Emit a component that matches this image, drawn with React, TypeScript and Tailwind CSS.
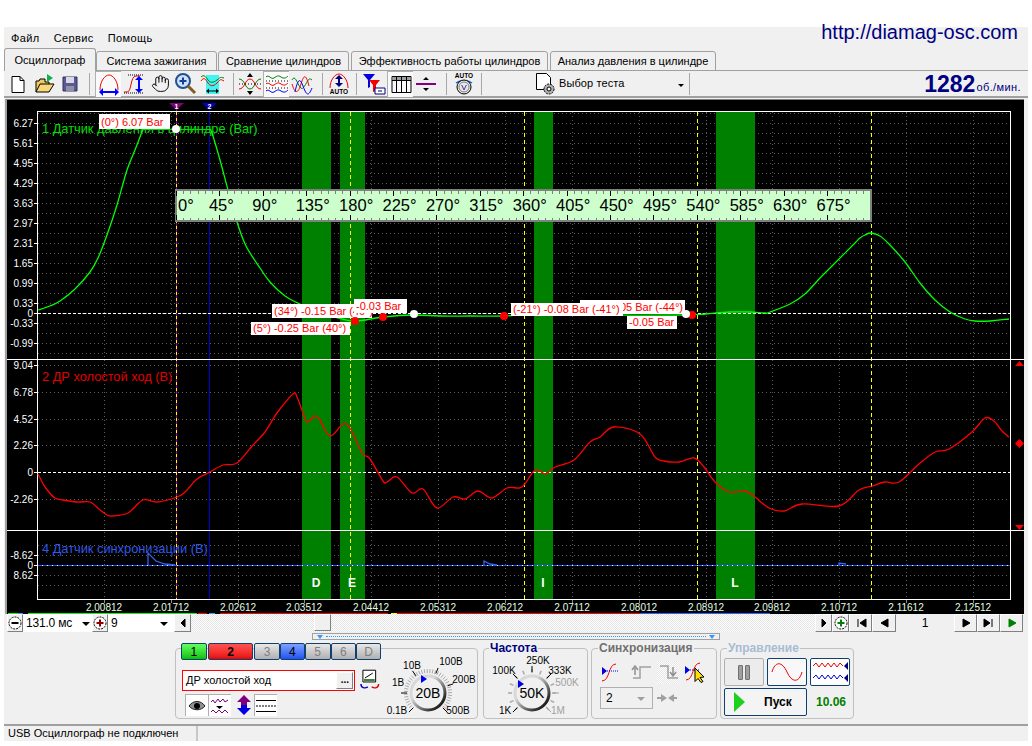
import { Hand } from "lucide-react";
import { ReactNode } from "react";

// ---------- chart data (page coordinates) ----------
const GRID_X = [104, 171, 238, 304, 371, 438, 505, 572, 639, 706, 772, 839, 906, 973];
const TIME_LABELS = [
  "2.00812", "2.01712", "2.02612", "2.03512", "2.04412", "2.05312", "2.06212",
  "2.07112", "2.08012", "2.08912", "2.09812", "2.10712", "2.11612", "2.12512",
];
const BANDS = [
  [302, 331],
  [340, 365],
  [534, 553],
  [716, 755],
];
const YELLOW_X = [350.5, 524.5, 697.5, 871.5];

const CH1_LABELS: [string, number][] = [
  ["6.27", 123], ["5.61", 143], ["4.95", 163], ["4.29", 183], ["3.63", 203], ["2.97", 223], ["2.31", 243],
  ["1.65", 263], ["0.99", 283], ["0.33", 303], ["0", 313], ["-0.33", 323], ["-0.99", 343],
];
const CH2_LABELS: [string, number][] = [
  ["9.04", 365], ["6.78", 392], ["4.52", 419], ["2.26", 445], ["0", 472], ["-2.26", 499],
];
const CH4_LABELS: [string, number][] = [
  ["-8.62", 555], ["0", 565], ["8.62", 575],
];

const GREEN_LEFT =
  "38,310 50,306 60,301 75,289 90,272 98,258 107,235 117,205 127,170 135,150 143,129";
const GREEN_RIGHT =
  "210,129 212,133 220,160 228,190 237,222 246,246 260,268 270,282 285,296 300,304 315,310 335,317 355,321 383,317 414,315 440,316 " +
  "470,316 505,316 534,314 600,315 686,315 692,315 705,314 730,312 750,312 765,313 770,312 790,304 805,294 820,278 838,260 855,243 " +
  "860,238 865,235 871,233 880,236 890,245 905,262 920,283 935,300 950,312 965,319 975,321 990,321 1009,319";

const RED_CURVE =
  "38,474 45,487 55,498 63,500 77,502 90,502 100,510 107,515 112,516 128,513 143,500 157,502 177,497 185,492 197,479 210,472 223,465 " +
  "237,463 253,445 265,432 277,413 293,394 297,397 303,413 307,422 315,416 320,420 330,436 343,424 350,428 362,453 370,459 383,481 " +
  "387,482 397,477 412,493 423,489 437,508 453,497 465,499 478,491 492,498 507,488 519,488 524,485 534,471 540,471 546,474 555,467 " +
  "574,460 590,442 600,437 614,427 640,434 655,457 664,461 679,462 694,458 704,467 715,482 729,492 745,491 755,497 769,508 784,511 " +
  "802,504 839,506 859,490 872,486 885,482 899,482 919,464 935,452 949,449 972,432 985,418 994,421 1002,431 1009,437";

// catmull-rom through the sampled points
const smooth = (raw: string) => {
  const p = raw.trim().split(/\s+/).map((s) => s.split(",").map(Number));
  let d = `M${p[0][0]} ${p[0][1]}`;
  for (let i = 0; i < p.length - 1; i++) {
    const a = p[Math.max(i - 1, 0)];
    const b = p[i];
    const c = p[i + 1];
    const e = p[Math.min(i + 2, p.length - 1)];
    d += `C${b[0] + (c[0] - a[0]) / 6} ${b[1] + (c[1] - a[1]) / 6} ${c[0] - (e[0] - b[0]) / 6} ${c[1] - (e[1] - b[1]) / 6} ${c[0]} ${c[1]}`;
  }
  return d;
};

// ---------- chart bits ----------
const Dotted = ({ x1, y1, x2, y2 }: { x1: number; y1: number; x2: number; y2: number }) => (
  <line x1={x1} y1={y1} x2={x2} y2={y2} stroke="#5c5c5c" strokeDasharray="1 3" shapeRendering="crispEdges" />
);

const YLabels = ({ items }: { items: [string, number][] }) => (
  <>
    {items.map(([t, y]) => (
      <g key={t + y}>
        <text x={33} y={y + 3.5} textAnchor="end" fill="#ffffff" fontSize={10}>
          {t}
        </text>
        <line x1={34} y1={y + 0.5} x2={37} y2={y + 0.5} stroke="#ffffff" shapeRendering="crispEdges" />
      </g>
    ))}
  </>
);

const Tag = ({ x, y, w, h, text, end }: { x: number; y: number; w: number; h: number; text: string; end?: boolean }) => (
  <g>
    <rect x={x} y={y} width={w} height={h} fill="#ffffff" />
    <text
      x={end ? x + w - 2 : x + 2}
      y={y + h - 3.5}
      textAnchor={end ? "end" : "start"}
      fill="#ff0000"
      fontSize={11}
    >
      {text}
    </text>
  </g>
);

const Ruler = () => {
  const step = 43.4;
  const labels = [0, 45, 90, 135, 180, 225, 270, 315, 360, 405, 450, 495, 540, 585, 630, 675];
  const minor = Array.from({ length: 96 }, (_, i) => 176.5 + (i * step) / 6);
  return (
    <g>
      <rect x={176} y={190} width={695} height={31} fill="#ccffcc" stroke="#808080" strokeWidth={2} />
      {minor.map((x, i) => (
        <g key={i} shapeRendering="crispEdges">
          <line x1={x} y1={191} x2={x} y2={i % 6 === 0 ? 196 : 194} stroke={i % 6 === 0 ? "#000000" : "#808080"} />
          <line x1={x} y1={220} x2={x} y2={i % 6 === 0 ? 215 : 218} stroke={i % 6 === 0 ? "#000000" : "#808080"} />
        </g>
      ))}
      {labels.map((d, i) => (
        <text key={d} x={i === 0 ? 178 : 176.5 + i * step - 11} y={211} fontSize={16.5} fill="#000000">
          {d}°
        </text>
      ))}
    </g>
  );
};

const Chart = () => (
  <div className="mt-px ml-px h-[515px] w-[1019px] border-t border-l-2 border-t-[#808080] border-l-[#a0a0a0] bg-black">
    <svg width={1017} height={514} viewBox="7 100 1017 514" className="block">
      {/* grid */}
      {GRID_X.map((x) => (
        <g key={x}>
          <Dotted x1={x + 0.5} y1={112} x2={x + 0.5} y2={599} />
          <line x1={x + 0.5} y1={600} x2={x + 0.5} y2={603} stroke="#8a8a8a" shapeRendering="crispEdges" />
        </g>
      ))}
      {Array.from({ length: 25 }, (_, i) => 113 + i * 10).map((y) => (
        <Dotted key={y} x1={38} y1={y + 0.5} x2={1010} y2={y + 0.5} />
      ))}
      {[365, 392, 419, 445, 499, 545, 555, 575, 585].map((y) => (
        <Dotted key={y} x1={38} y1={y + 0.5} x2={1010} y2={y + 0.5} />
      ))}

      {BANDS.map(([a, b]) => (
        <rect key={a} x={a} y={111} width={b - a} height={489} fill="#008000" />
      ))}

      {/* cursors */}
      {YELLOW_X.map((x) => (
        <line key={x} x1={x} y1={112} x2={x} y2={599} stroke="#ffff00" strokeDasharray="4 3" shapeRendering="crispEdges" />
      ))}
      <line x1={176.5} y1={103} x2={176.5} y2={600} stroke="#a000a0" shapeRendering="crispEdges" />
      <line x1={176.5} y1={112} x2={176.5} y2={599} stroke="#ffff00" strokeDasharray="3 3" shapeRendering="crispEdges" />
      <line x1={209.5} y1={103} x2={209.5} y2={600} stroke="#0000d0" shapeRendering="crispEdges" />
      <polygon points="169,103 184,103 176.5,110" fill="#800080" />
      <polygon points="202,103 217,103 209.5,110" fill="#0000c0" />
      <text x={176.5} y={108.5} textAnchor="middle" fontSize={7} fontWeight="bold" fill="#ffffff">1</text>
      <text x={209.5} y={108.5} textAnchor="middle" fontSize={7} fontWeight="bold" fill="#ffffff">2</text>

      {/* zero lines */}
      <line x1={38} y1={313.5} x2={1010} y2={313.5} stroke="#ffffff" strokeDasharray="3 2" shapeRendering="crispEdges" />
      <line x1={38} y1={472.5} x2={1010} y2={472.5} stroke="#ffffff" strokeDasharray="3 2" shapeRendering="crispEdges" />
      <line x1={38} y1={565.5} x2={1010} y2={565.5} stroke="#ffffff" shapeRendering="crispEdges" />
      <line x1={38} y1={565.5} x2={1010} y2={565.5} stroke="#2050ff" strokeDasharray="4 1" shapeRendering="crispEdges" />

      {/* frame */}
      <rect x={37.5} y={111.5} width={973} height={488} fill="none" stroke="#ffffff" shapeRendering="crispEdges" />
      <line x1={7} y1={359.5} x2={1024} y2={359.5} stroke="#ffffff" shapeRendering="crispEdges" />
      <line x1={7} y1={530.5} x2={1024} y2={530.5} stroke="#ffffff" shapeRendering="crispEdges" />

      <YLabels items={CH1_LABELS} />
      <YLabels items={CH2_LABELS} />
      <YLabels items={CH4_LABELS} />

      {/* traces */}
      <text x={42} y={133} fontSize={12.8} fill="#00e000">1 Датчик давления в цилиндре (Bar)</text>
      <text x={42} y={381} fontSize={12.8} fill="#e00000">2 ДР холостой ход (B)</text>
      <text x={42} y={553} fontSize={12.8} fill="#3358e8">4 Датчик синхронизации (B)</text>
      <path d={smooth(GREEN_LEFT)} fill="none" stroke="#00ff00" strokeWidth={1.3} />
      <path d="M143 129H210" fill="none" stroke="#00e000" shapeRendering="crispEdges" />
      <path d={smooth(GREEN_RIGHT)} fill="none" stroke="#00ff00" strokeWidth={1.3} />
      <path d={smooth(RED_CURVE)} fill="none" stroke="#ff0000" strokeWidth={1.3} />
      <polyline points="148,565 148,553 156,561 165,564 175,565" fill="none" stroke="#3366ee" strokeWidth={1.3} />
      <polyline points="484,565 484,561 490,564 497,565" fill="none" stroke="#3366ee" strokeWidth={1.3} />
      <polyline points="839,565 839,563 846,564" fill="none" stroke="#3366ee" strokeWidth={1.3} />

      <Ruler />

      {/* measure tags */}
      <Tag x={99} y={114} w={71} h={15} text="(0°) 6.07 Bar" />
      <Tag x={272} y={304} w={100} h={14} text="(34°) -0.15 Bar (40°)" />
      <Tag x={354} y={299} w={53} h={14} text="-0.03 Bar" />
      <Tag x={251} y={322} w={99} h={13} text="(5°) -0.25 Bar (40°)" />
      <Tag x={580} y={300} w={105} h={14} text="-0.05 Bar (-44°)" end />
      <Tag x={511} y={303} w={112} h={13} text="(-21°) -0.08 Bar (-41°)" />
      <Tag x={627} y={316} w={50} h={13} text="-0.05 Bar" />
      {[[355, 321], [383, 317], [504, 316], [692, 315]].map(([x, y]) => (
        <circle key={x} cx={x} cy={y} r={4} fill="#ff0000" />
      ))}
      {[[176, 129], [414, 314], [686, 314]].map(([x, y]) => (
        <circle key={x} cx={x} cy={y} r={4} fill="#ffffff" />
      ))}

      {/* timing letters */}
      {[["D", 316], ["E", 352], ["I", 543], ["L", 735]].map(([t, x]) => (
        <text key={t} x={x} y={587} textAnchor="middle" fontSize={12} fontWeight="bold" fill="#ffffff">
          {t}
        </text>
      ))}

      {/* channel 2 scale markers */}
      <polygon points="1019.5,361 1024,366 1015,366" fill="#ff0000" />
      <polygon points="1019.5,439 1024,443.500 1019.5,448 1015,443.500" fill="#ff0000" />
      <polygon points="1015,525 1024,525 1019.5,530" fill="#ff0000" />

      {/* time axis */}
      {TIME_LABELS.map((t, i) => (
        <text key={t} x={GRID_X[i]} y={611} textAnchor="middle" fontSize={10} fill="#e0ffe0">
          {t}
        </text>
      ))}
      <g shapeRendering="crispEdges">
        <line x1={8} y1={613.5} x2={18} y2={613.5} stroke="#00ff00" />
        <line x1={18} y1={613.5} x2={23} y2={613.5} stroke="#3399ff" />
        <line x1={28} y1={613.5} x2={197} y2={613.5} stroke="#00ff00" />
        <line x1={198} y1={613.5} x2={207} y2={613.5} stroke="#ff0000" />
        <line x1={209} y1={613.5} x2={215} y2={613.5} stroke="#3399ff" />
        <line x1={220} y1={613.5} x2={388} y2={613.5} stroke="#ff0000" />
        <line x1={391} y1={613.5} x2={397} y2={613.5} stroke="#ffff00" />
        <line x1={397} y1={613.5} x2={640} y2={613.5} stroke="#ff0000" />
        <line x1={640} y1={613.5} x2={770} y2={613.5} stroke="#2266ff" />
      </g>
    </svg>
  </div>
);

// ---------- toolbar icons ----------
const Ico = ({ children, w = 24, h = 24 }: { children: ReactNode; w?: number; h?: number }) => (
  <svg width={w} height={h} viewBox={`0 0 ${w} ${h}`} fill="none">
    {children}
  </svg>
);

const IconNew = () => (
  <Ico>
    <path d="M6 4.5h8l4 4v12H6z" fill="#fff" stroke="#000" />
    <path d="M14 4.5v4h4" stroke="#000" />
  </Ico>
);
const IconOpen = () => (
  <Ico>
    <path d="M4 20V9h3l1-2h5v3h4v2" fill="#f0c860" stroke="#000" />
    <path d="M4 20l4-8h14l-5 8z" fill="#f8d878" stroke="#000" />
    <path d="M15 2l6 4-6 4z" fill="#10b050" />
  </Ico>
);
const IconSave = () => (
  <Ico>
    <path d="M5 5h14v14H5z" fill="#5a5a90" stroke="#303060" />
    <path d="M8 5h8v6H8z" fill="#d8d8e8" />
    <path d="M8 14h8v5H8z" fill="#9090a8" />
  </Ico>
);
const DoubleH = ({ x1, x2, y }: { x1: number; x2: number; y: number }) => (
  <g>
    <path d={`M${x1 + 2} ${y}H${x2 - 2}`} stroke="#0000ff" strokeWidth={2} />
    <path d={`M${x1} ${y}l4-4v8z M${x2} ${y}l-4-4v8z`} fill="#0000ff" />
  </g>
);
const DoubleV = ({ x, y1, y2, c = "#0000ff" }: { x: number; y1: number; y2: number; c?: string }) => (
  <g>
    <path d={`M${x} ${y1 + 2}V${y2 - 2}`} stroke={c} strokeWidth={2} />
    <path d={`M${x} ${y1}l-4 4h8z M${x} ${y2}l-4-4h8z`} fill={c} />
  </g>
);
const IconArcWidth = () => (
  <Ico>
    <path d="M3 18C3 9 8 3 12 3s9 6 9 15" stroke="#f00000" />
    <DoubleH x1={2} x2={22} y={20} />
  </Ico>
);
const IconArcHeight = () => (
  <Ico>
    <path d="M2 20h3c5 0 3-16 9-16h4" stroke="#f00000" />
    <path d="M6 3h16M2 21h20" stroke="#000" strokeDasharray="1 1" />
    <DoubleV x={17} y1={4} y2={21} />
  </Ico>
);
const IconZoom = () => (
  <Ico>
    <circle cx={9} cy={9} r={7} fill="#d0e0f8" stroke="#205090" strokeWidth={2} />
    <path d="M5.5 9h7M9 5.5v7" stroke="#1040a0" strokeWidth={2} />
    <path d="M14 14l7 7" stroke="#806020" strokeWidth={3} />
  </Ico>
);
const IconCyan = () => (
  <Ico>
    <path d="M6 3h13v19H6z" fill="#40f4f4" />
    <path d="M1 9c3-5 5-1 7 2s5 4 9 0 3-4 7-2" stroke="#f00000" />
    <path d="M1 5c3-3 5 0 7 3s5 3 9 0 3-3 7-2" stroke="#008000" />
    <path d="M8 19h9" stroke="#000" />
    <path d="M6 19l3-2.5v5zM19 19l-3-2.5v5z" fill="#000" />
  </Ico>
);
const IconCross = () => (
  <Ico>
    <path d="M1 7c6 0 6 10 11 10s5-10 11-10" stroke="#008000" />
    <path d="M1 17c6 0 6-10 11-10s5 10 11 10" stroke="#f00000" />
    <path d="M12 1l-3 4h6zM12 23l-3-4h6z" fill="#000" />
    <path d="M1 12h22" stroke="#000" strokeDasharray="1 2" />
  </Ico>
);
const IconRows = () => (
  <Ico>
    <path d="M1 5c3-3 5 3 8 1s4-3 7-1 5 1 7-1" stroke="#008000" />
    <path d="M1 12c3-3 5 3 8 1s4-3 7-1 5 1 7-1" stroke="#f00000" />
    <path d="M1 19c3-3 5 3 8 1s4-3 7-1 5 1 7-1" stroke="#0000f0" />
    <path d="M1 9h22M1 16h22" stroke="#000" strokeDasharray="1 2" />
  </Ico>
);
const IconOverlap = () => (
  <Ico>
    <path d="M2 8c4-8 7 12 11 8s5-12 9-8" stroke="#008000" />
    <path d="M2 12c3 10 6 10 9 0s5-10 8 2" stroke="#f00000" />
    <path d="M5 20c3-14 5-14 8-6s5 12 9 2" stroke="#0000f0" />
  </Ico>
);
const Auto = ({ y, x = 12 }: { y: number; x?: number }) => (
  <text x={x} y={y} textAnchor="middle" fontSize={6.5} fontWeight="bold" fill="#000">
    AUTO
  </text>
);
const IconAuto = () => (
  <Ico>
    <path d="M3 16C3 8 8 2 12 2s9 6 9 14" stroke="#f00000" />
    <DoubleV x={12} y1={3} y2={15} c="#000080" />
    <Auto y={22} />
  </Ico>
);
const IconFilter = () => (
  <Ico>
    <path d="M1 2h12L8 8v7l-2 1V8z" fill="#0000e0" />
    <path d="M7 8h11l-4 5v6l-3 1v-7z" fill="#f00000" />
    <path d="M13 16h10v6H13z" fill="#fff" stroke="#000080" />
    <path d="M16 19h4" stroke="#000080" />
  </Ico>
);
const IconTable = () => (
  <Ico>
    <path d="M4 5h17v3H4z" fill="#a0a0a0" />
    <path d="M3 4.5h19v16H3zM3 8.5h19M7.500 5v15M12.500 5v15M17.500 5v15" stroke="#000" />
  </Ico>
);
const IconSplit = () => (
  <Ico>
    <path d="M2 12h20" stroke="#800080" strokeWidth={2} />
    <path d="M12 5l-3 3h6zM12 19l-3-3h6z" fill="#000" />
  </Ico>
);
const IconAutoV = () => (
  <Ico>
    <Auto y={6} />
    <path d="M4 11c4-3 12-3 16 0" stroke="#1060d0" strokeWidth={1.5} />
    <circle cx={12} cy={15} r={7} fill="#e8e8e8" stroke="#000" />
    <circle cx={12} cy={15} r={5} stroke="#808080" />
    <text x={12} y={18} textAnchor="middle" fontSize={8} fill="#000080">V</text>
  </Ico>
);
const IconTest = () => (
  <Ico w={22} h={26}>
    <path d="M1.5 2.5h10l4 4v12h-14z" fill="#fff" stroke="#000" />
    <circle cx={14} cy={18} r={5} fill="#b0b0b0" stroke="#000" strokeDasharray="2 1" />
    <circle cx={14} cy={18} r={2} fill="#fff" stroke="#000" />
  </Ico>
);

const Btn = ({ children, active }: { children: ReactNode; active?: boolean }) => (
  <div
    className={`flex h-[26px] w-[26px] items-center justify-center ${
      active ? "border-t border-l border-[#b0b0b0] bg-[#fafafa]" : ""
    }`}
  >
    {children}
  </div>
);

const Sep = ({ className }: { className: string }) => <div className={`h-[22px] w-px bg-[#a8a8a8] ${className}`} />;

const Toolbar = () => (
  <div className="flex h-[28px] items-center border-t border-b-2 border-[#a0a0a0] pl-px">
    <Btn><IconNew /></Btn>
    <Btn><IconOpen /></Btn>
    <Btn><IconSave /></Btn>
    <Sep className="mr-[5px] ml-[6px]" />
    <Btn active><IconArcWidth /></Btn>
    <Btn><IconArcHeight /></Btn>
    <Btn><Hand size={19} strokeWidth={1.2} color="#000" /></Btn>
    <Btn><IconZoom /></Btn>
    <Btn><IconCyan /></Btn>
    <Sep className="mr-[3px] ml-[8px]" />
    <Btn><IconCross /></Btn>
    <Btn active><IconRows /></Btn>
    <Btn><IconOverlap /></Btn>
    <Sep className="mr-[3px] ml-[7px]" />
    <Btn><IconAuto /></Btn>
    <Sep className="mr-[4px] ml-[4px]" />
    <Btn><IconFilter /></Btn>
    <Btn active><IconTable /></Btn>
    <Btn><IconSplit /></Btn>
    <Sep className="mr-[4px] ml-[7px]" />
    <Btn><IconAutoV /></Btn>
    <Sep className="ml-[4px]" />
    <div className="ml-[53px] flex w-[154px] items-center">
      <IconTest />
      <span className="ml-[2px] text-[11px] tracking-[0.1px]">Выбор теста</span>
      <span className="mt-[3px] ml-auto mr-[5px] h-0 w-0 border-x-[3px] border-t-[3px] border-x-transparent border-t-black" />
    </div>
    <Sep className="" />
    <div className="ml-auto flex items-end pr-[7px]">
      <span className="text-[23px] leading-[26px] font-bold text-[#000080]">1282</span>
      <span className="mb-[3px] ml-px text-[11px] leading-[14px] tracking-[0.4px] text-[#000080]">об./мин.</span>
    </div>
  </div>
);

// ---------- tabs ----------
const TABS: [string, string][] = [
  ["Система зажигания", "w-[121px] ml-0"],
  ["Сравнение цилиндров", "w-[131px] ml-px"],
  ["Эффективность работы цилиндров", "w-[197px] ml-[2px]"],
  ["Анализ давления в цилиндре", "w-[166px] ml-[2px]"],
];

const Tabs = () => (
  <div className="relative z-10 -mb-px flex h-[22px] items-end">
    <div className="flex h-[23px] w-[92px] items-center justify-center rounded-t-[3px] border-x border-t border-[#a0a0a0] bg-[#f0f0f0] text-[11px]">
      Осциллограф
    </div>
    {TABS.map(([label, cls]) => (
      <div
        key={label}
        className={`flex h-[20px] items-center justify-center rounded-t-[3px] border-x border-t border-b border-[#a0a0a0] text-[11px] ${cls}`}
      >
        {label}
      </div>
    ))}
  </div>
);

// ---------- scroll row ----------
const raised =
  "flex items-center justify-center border border-t-white border-l-white border-r-[#808080] border-b-[#808080] bg-[#f0f0f0]";

const RoundSign = ({ plus, color }: { plus?: boolean; color: string }) => (
  <svg width={14} height={14} viewBox="0 0 14 14">
    <circle cx={7} cy={7} r={6} fill="#fff" stroke="#000" strokeDasharray="2 1" />
    <path d={plus ? "M3.5 7h7M7 3.5v7" : "M3.5 7h7"} stroke={color} strokeWidth={2} />
  </svg>
);

const Arrow = ({ d, color = "#000" }: { d: string; color?: string }) => (
  <svg width={12} height={10} viewBox="0 0 12 10">
    <path d={d} fill={color} stroke={color} />
  </svg>
);

const ScrollRow = () => (
  <div className="flex h-[18px]">
    <div className="ml-[3px] flex w-[1018px] items-stretch">
      <div className={`w-[16px] ${raised}`}><RoundSign color="#000" /></div>
      <div className="flex w-[69px] items-center bg-white pl-[3px] text-[12px] tracking-[-0.2px]">
        131.0 мс
        <span className="mt-px ml-auto mr-[2px] h-0 w-0 border-x-[4px] border-t-[4px] border-x-transparent border-t-black" />
      </div>
      <div className={`w-[16px] ${raised}`}><RoundSign plus color="#900000" /></div>
      <div className="flex w-[66px] items-center bg-white pl-[3px] text-[12px]">
        9
        <span className="mt-px ml-auto mr-[6px] h-0 w-0 border-x-[4px] border-t-[4px] border-x-transparent border-t-black" />
      </div>
      <div className={`w-[17px] ${raised}`}><Arrow d="M8 1v8L4 5z" /></div>
      <div className="flex w-[624px] bg-[repeating-conic-gradient(#e4e4e4_0_25%,#ffffff_0_50%)] bg-[length:2px_2px]">
        <div className={`ml-[123px] h-[17px] w-[17px] ${raised}`} />
      </div>
      <div className={`w-[17px] ${raised}`}><Arrow d="M4 1v8l4-4z" /></div>
      <div className={`w-[17px] ${raised}`}><RoundSign plus color="#008000" /></div>
      <div className={`w-[23px] ${raised}`}><Arrow d="M3 1v8M11 1v8L5 5z" /></div>
      <div className={`w-[24px] ${raised}`}><Arrow d="M10 1v8L3 5z" /></div>
      <div className="flex w-[58px] items-center justify-center text-[12px]">1</div>
      <div className={`w-[23px] ${raised}`}><Arrow d="M3 1v8l7-4z" /></div>
      <div className={`w-[23px] ${raised}`}><Arrow d="M1 1v8l6-4zM9 1v8" /></div>
      <div className={`w-[23px] ${raised}`}><Arrow d="M3 1v8l7-4z" color="#008000" /></div>
    </div>
  </div>
);

const Slider = () => (
  <div className="mt-px ml-[308px] flex h-[7px] w-[408px] items-center border border-[#a0a0a0] px-[4px]">
    <span className="h-0 w-0 border-x-[3px] border-t-[4px] border-x-transparent border-t-[#3399ff]" />
    <div className="mx-[3px] flex-1 border-t border-dotted border-[#3399ff]" />
    <span className="h-0 w-0 border-x-[3px] border-t-[4px] border-x-transparent border-t-[#3399ff]" />
  </div>
);

// ---------- knobs ----------
type KnobLabel = { t: string; x: number; y: number; off?: boolean };

const Knob = ({
  id, box, cx, cy, value, labels, majors, minorStep, minorWidth, marker,
}: {
  id: string;
  box: [number, number, number, number];
  cx: number;
  cy: number;
  value: string;
  labels: KnobLabel[];
  majors: { a: number; off?: boolean }[];
  minorStep: number;
  minorWidth: number;
  marker: [number, number];
}) => {
  const pt = (a: number, r: number) => {
    const rad = (a * Math.PI) / 180;
    return [cx + r * Math.sin(rad), cy - r * Math.cos(rad)];
  };
  const minors: number[] = [];
  for (let a = -135; a <= 135; a += minorStep) minors.push(a);
  return (
    <svg width={box[2]} height={box[3]} viewBox={box.join(" ")} className="block">
      <defs>
        <linearGradient id={id} x1="0" y1="0" x2="1" y2="1">
          <stop offset="0.35" stopColor="#d8d8d8" />
          <stop offset="0.85" stopColor="#202020" />
        </linearGradient>
      </defs>
      {minors.map((a) => {
        const [x1, y1] = pt(a, 20);
        const [x2, y2] = pt(a, 24);
        return <line key={a} x1={x1} y1={y1} x2={x2} y2={y2} stroke="#a8a8a8" strokeWidth={minorWidth} />;
      })}
      {majors.map(({ a, off }) => {
        const [x1, y1] = pt(a, 21);
        const [x2, y2] = pt(a, 27);
        return <line key={a} x1={x1} y1={y1} x2={x2} y2={y2} stroke={off ? "#a0a0a0" : "#000000"} />;
      })}
      <circle cx={cx} cy={cy} r={17} fill="#f0f0f0" stroke={`url(#${id})`} strokeWidth={3} />
      <polygon points={`${marker[0] - 2},${marker[1] - 4} ${marker[0] + 4},${marker[1]} ${marker[0] - 2},${marker[1] + 4}`} fill="#0000e0" />
      <text x={cx} y={cy + 5} textAnchor="middle" fontSize={14} fill="#000">{value}</text>
      {labels.map((l) => (
        <text key={l.t} x={l.x} y={l.y} textAnchor="middle" fontSize={10} fill={l.off ? "#a0a0a0" : "#000"}>
          {l.t}
        </text>
      ))}
    </svg>
  );
};

// ---------- control panel ----------
const CHANNELS: [string, string][] = [
  ["1", "w-[27px] from-[#60ff60] to-[#00c000] text-black ml-0"],
  ["2", "w-[48px] from-[#ff5050] to-[#e80000] text-black font-bold ml-[1px]"],
  ["3", "w-[27px] from-[#e8e8e8] to-[#b0b0b0] text-[#808080] ml-[1px]"],
  ["4", "w-[26px] from-[#80a0ff] to-[#2050f0] text-black ml-0"],
  ["5", "w-[27px] from-[#e8e8e8] to-[#b0b0b0] text-[#808080] ml-0"],
  ["6", "w-[27px] from-[#e8e8e8] to-[#b0b0b0] text-[#808080] ml-0"],
  ["D", "w-[26px] from-[#e8e8e8] to-[#b0b0b0] text-[#808080] ml-0"],
];

const SmallIcon = ({ children, boxed }: { children: ReactNode; boxed?: boolean }) => (
  <div className={`flex h-[22px] w-[23px] items-center justify-center ${boxed ? "border-t border-l border-[#b0b0b0] bg-white" : ""}`}>
    {children}
  </div>
);

const ChannelGroup = () => (
  <div className="flex h-[71px] w-[303px] rounded-[4px] border border-[#c0c0c0]">
    <div className="w-[205px] pl-[5px]">
      <div className="-mt-[6px] flex">
        {CHANNELS.map(([t, cls]) => (
          <div
            key={t}
            className={`flex h-[17px] items-center justify-center rounded-[2px] border border-[#104070] bg-linear-to-b text-[12px] ${cls}`}
          >
            {t}
          </div>
        ))}
      </div>
      <div className="mt-[9px] ml-px flex items-center">
        <div className="flex h-[21px] w-[177px] items-center border border-[#ff0000] bg-white pl-[3px] text-[11px]">
          ДР холостой ход
          <div className={`mr-px ml-auto h-[17px] w-[17px] ${raised} text-[10px] leading-none font-bold`}>...</div>
        </div>
        <svg width={22} height={22} viewBox="0 0 22 22" className="ml-[4px]">
          <path d="M4 1h13v12H4z" fill="#fff" stroke="#000" />
          <path d="M6 9l8-5" stroke="#000" />
          <path d="M5 10h11v2H5z" fill="#408040" />
          <path d="M2 15c0 4 4 5 7 3" stroke="#0000c0" strokeWidth={1.5} fill="none" />
          <path d="M20 15c0 4-4 5-7 3" stroke="#e00000" strokeWidth={1.5} fill="none" />
        </svg>
      </div>
      <div className="mt-[3px] ml-[4px] flex items-center">
        <SmallIcon boxed>
          <svg width={18} height={12} viewBox="0 0 18 12">
            <path d="M1 6c4-6 12-6 16 0-4 5-12 5-16 0z" fill="#909090" stroke="#202020" />
            <circle cx={9} cy={6} r={3} fill="#000" />
          </svg>
        </SmallIcon>
        <SmallIcon boxed>
          <svg width={20} height={20} viewBox="0 0 20 20" fill="none">
            <path d="M1 6l2-2 2 3 3-4 2 3 3-3 2 3 3-2" stroke="#800080" />
            <path d="M6 10h7l-3.500 3z" fill="#000" />
            <path d="M1 16l2-2 3 3 3-3 3 3 3-3 3 3" stroke="#800080" />
          </svg>
        </SmallIcon>
        <div className="ml-[4px] flex h-[22px] w-[18px] items-center justify-center">
          <svg width={16} height={20} viewBox="0 0 16 20">
            <path d="M8 0l7 7h-4v3H5V7H1z" fill="#800080" />
            <path d="M8 20l7-7h-4v-3H5v3H1z" fill="#0000e0" />
          </svg>
        </div>
        <div className="ml-[1px]">
          <SmallIcon boxed>
            <svg width={20} height={18} viewBox="0 0 20 18">
              <path d="M0 3.500h20M0 14.500h20" stroke="#000" />
              <path d="M0 9h20" stroke="#000" strokeDasharray="2 1" />
            </svg>
          </SmallIcon>
        </div>
      </div>
    </div>
    <Knob
      id="volt"
      box={[381, 651, 96, 69]}
      cx={428}
      cy={695}
      value="20В"
      marker={[423, 681]}
      minorStep={7}
      minorWidth={1}
      majors={[{ a: -135 }, { a: -90 }, { a: -35 }, { a: 22 }, { a: 70 }, { a: 135 }]}
      labels={[
        { t: "10В", x: 412, y: 671 },
        { t: "100В", x: 451, y: 667 },
        { t: "1В", x: 398, y: 688 },
        { t: "200В", x: 464, y: 685 },
        { t: "0.1В", x: 397, y: 716 },
        { t: "500В", x: 458, y: 716 },
      ]}
    />
  </div>
);

const FreqGroup = () => (
  <div className="ml-[5px] h-[71px] w-[105px] rounded-[4px] border border-[#c0c0c0]">
    <div className="-mt-[8px] ml-[5px] w-fit bg-[#f0f0f0] px-px text-[12px] leading-[14px] font-bold text-[#000080]">Частота</div>
    <Knob
      id="freq"
      box={[484, 657, 103, 62]}
      cx={532}
      cy={695}
      value="50K"
      marker={[520, 686]}
      minorStep={22.5}
      minorWidth={1.5}
      majors={[{ a: -135 }, { a: -45 }, { a: 0 }, { a: 45 }, { a: 90, off: true }, { a: 135, off: true }]}
      labels={[
        { t: "100K", x: 504, y: 676 },
        { t: "250K", x: 538, y: 666 },
        { t: "333K", x: 560, y: 676 },
        { t: "500K", x: 567, y: 688, off: true },
        { t: "1K", x: 505, y: 716 },
        { t: "1M", x: 558, y: 716, off: true },
      ]}
    />
  </div>
);

const SyncGroup = () => (
  <div className="ml-[3px] h-[71px] w-[126px] rounded-[4px] border border-[#c0c0c0]">
    <div className="-mt-[8px] ml-[6px] w-fit bg-[#f0f0f0] px-px text-[12px] leading-[14px] font-bold text-[#707070]">Синхронизация</div>
    <div className="mt-[5px] ml-[9px] flex items-center gap-[4px]">
      <svg width={24} height={22} viewBox="0 0 24 22" fill="none">
        <path d="M1 20c8 0 6-17 14-17" stroke="#f00000" />
        <path d="M4 10h14" stroke="#0000e0" strokeDasharray="1 1" />
        <path d="M1 6l5 4-5 4z" fill="#0000e0" />
      </svg>
      <svg width={24} height={22} viewBox="0 0 24 22" fill="none">
        <path d="M4 17h7V6h11" stroke="#a0a0a0" strokeWidth={1.5} />
        <path d="M6 14V7M3 9l3-4 3 4" stroke="#909090" strokeWidth={1.5} />
      </svg>
      <div className="flex h-[23px] w-[23px] items-center justify-center bg-[repeating-conic-gradient(#e4e4e4_0_25%,#ffffff_0_50%)] bg-[length:2px_2px]">
        <svg width={20} height={20} viewBox="0 0 20 20" fill="none">
          <path d="M1 4h8v12h10" stroke="#a0a0a0" strokeWidth={1.5} />
          <path d="M14 5v8M11 10l3 4 3-4" stroke="#909090" strokeWidth={1.5} />
        </svg>
      </div>
      <svg width={26} height={24} viewBox="0 0 26 24" fill="none">
        <path d="M2 20c8 0 6-17 14-17" stroke="#f00000" />
        <path d="M2 10h14" stroke="#0000e0" strokeDasharray="1 1" />
        <path d="M1 6l5 4-5 4z" fill="#0000e0" />
        <path d="M11 8l9 9-4 .5 3 4-2 1-3-4-3 3z" fill="#ffe000" stroke="#000" />
      </svg>
    </div>
    <div className="mt-[3px] ml-[8px] flex items-center">
      <div className="flex h-[22px] w-[53px] items-center border border-[#b0b0b0] pl-[5px] text-[12px]">
        2
        <span className="mt-px ml-auto mr-[7px] h-0 w-0 border-x-[4px] border-t-[4px] border-x-transparent border-t-[#a0a0a0]" />
      </div>
      <svg width={20} height={10} viewBox="0 0 20 10" className="ml-[4px]">
        <path d="M0 5h5M20 5h-5" stroke="#a0a0a0" strokeWidth={2} />
        <path d="M10 5L4 1v8zM11 5l6-4v8z" fill="#a0a0a0" />
      </svg>
    </div>
  </div>
);

const ControlGroup = () => (
  <div className="ml-[3px] h-[71px] w-[134px] rounded-[4px] border border-[#c0c0c0]">
    <div className="-mt-[8px] ml-[6px] w-fit bg-[#f0f0f0] px-px text-[12px] leading-[14px] font-bold text-[#a8bcd4]">Управление</div>
    <div className="mt-[3px] ml-[3px] flex gap-[3px]">
      <div className="flex h-[28px] w-[40px] items-center justify-center gap-[2px] rounded-[2px] border border-[#b0b0b0] bg-[#ececec]">
        <span className="h-[15px] w-[5px] rounded-[1px] border border-[#707070] bg-[#a0a0a0]" />
        <span className="h-[15px] w-[5px] rounded-[1px] border border-[#707070] bg-[#a0a0a0]" />
      </div>
      <div className="flex h-[28px] w-[40px] items-center justify-center rounded-[2px] border border-[#104070] bg-[#f8f8f8]">
        <svg width={32} height={22} viewBox="0 0 32 22" fill="none">
          <path d="M1 11C4 0 11 0 16 11s12 11 15 0" stroke="#f00000" />
        </svg>
      </div>
      <div className="flex h-[28px] w-[40px] items-center justify-center rounded-[2px] border border-[#104070] bg-white">
        <svg width={36} height={24} viewBox="0 0 36 24" fill="none">
          <path d="M1 6l3-3 3 4 3-4 3 4 3-4 3 4 3-4 3 4 3-4 3 3" stroke="#f00000" />
          <path d="M1 18l3-3 3 4 3-4 3 4 3-4 3 4 3-4 3 4 3-4 3 3" stroke="#0000e0" />
          <path d="M36 2v8l-4-4zM36 14v8l-4-4z" fill="#000080" />
        </svg>
      </div>
    </div>
    <div className="mt-[2px] ml-[3px] flex items-center">
      <div className="flex h-[28px] w-[83px] items-center rounded-[2px] border border-[#104070] bg-[#f4f4f4] pl-[9px]">
        <span className="h-0 w-0 border-y-[10px] border-l-[11px] border-y-transparent border-l-[#20d020]" />
        <span className="ml-[19px] text-[12px] font-bold">Пуск</span>
      </div>
      <span className="ml-[9px] text-[12px] font-bold text-[#008000]">10.06</span>
    </div>
  </div>
);

const StatusBar = () => (
  <div className="mt-px flex h-[17px] border-t-2 border-[#a0a0a0] text-[11px]">
    <div className="flex w-[190px] items-center pl-[4px]">USB Осциллограф не подключен</div>
    <div className="ml-[2px] flex-1 border-l-2 border-[#c8c8c8]" />
  </div>
);

export default function App() {
  return (
    <div className="h-[746px] w-[1032px] overflow-hidden bg-white px-[4px] pt-[27px] pb-[5px] font-['Liberation_Sans',sans-serif] text-black">
      <div className="relative flex h-full flex-col bg-[#f0f0f0]">
        {/* url sticks up over the white strip */}
        <div className="absolute -top-[7px] right-[10px] text-[20px] leading-[24px] text-[#000080]">http://diamag-osc.com</div>
        <div className="flex h-[22px] items-center gap-[14px] pl-[7px] text-[11px] tracking-[0.4px]">
          <span>Файл</span>
          <span>Сервис</span>
          <span>Помощь</span>
        </div>
        <Tabs />
        <Toolbar />
        <Chart />
        <ScrollRow />
        <Slider />
        <div className="mt-[8px] ml-[171px] flex">
          <ChannelGroup />
          <FreqGroup />
          <SyncGroup />
          <ControlGroup />
        </div>
        <div className="mt-auto">
          <StatusBar />
        </div>
      </div>
    </div>
  );
}
